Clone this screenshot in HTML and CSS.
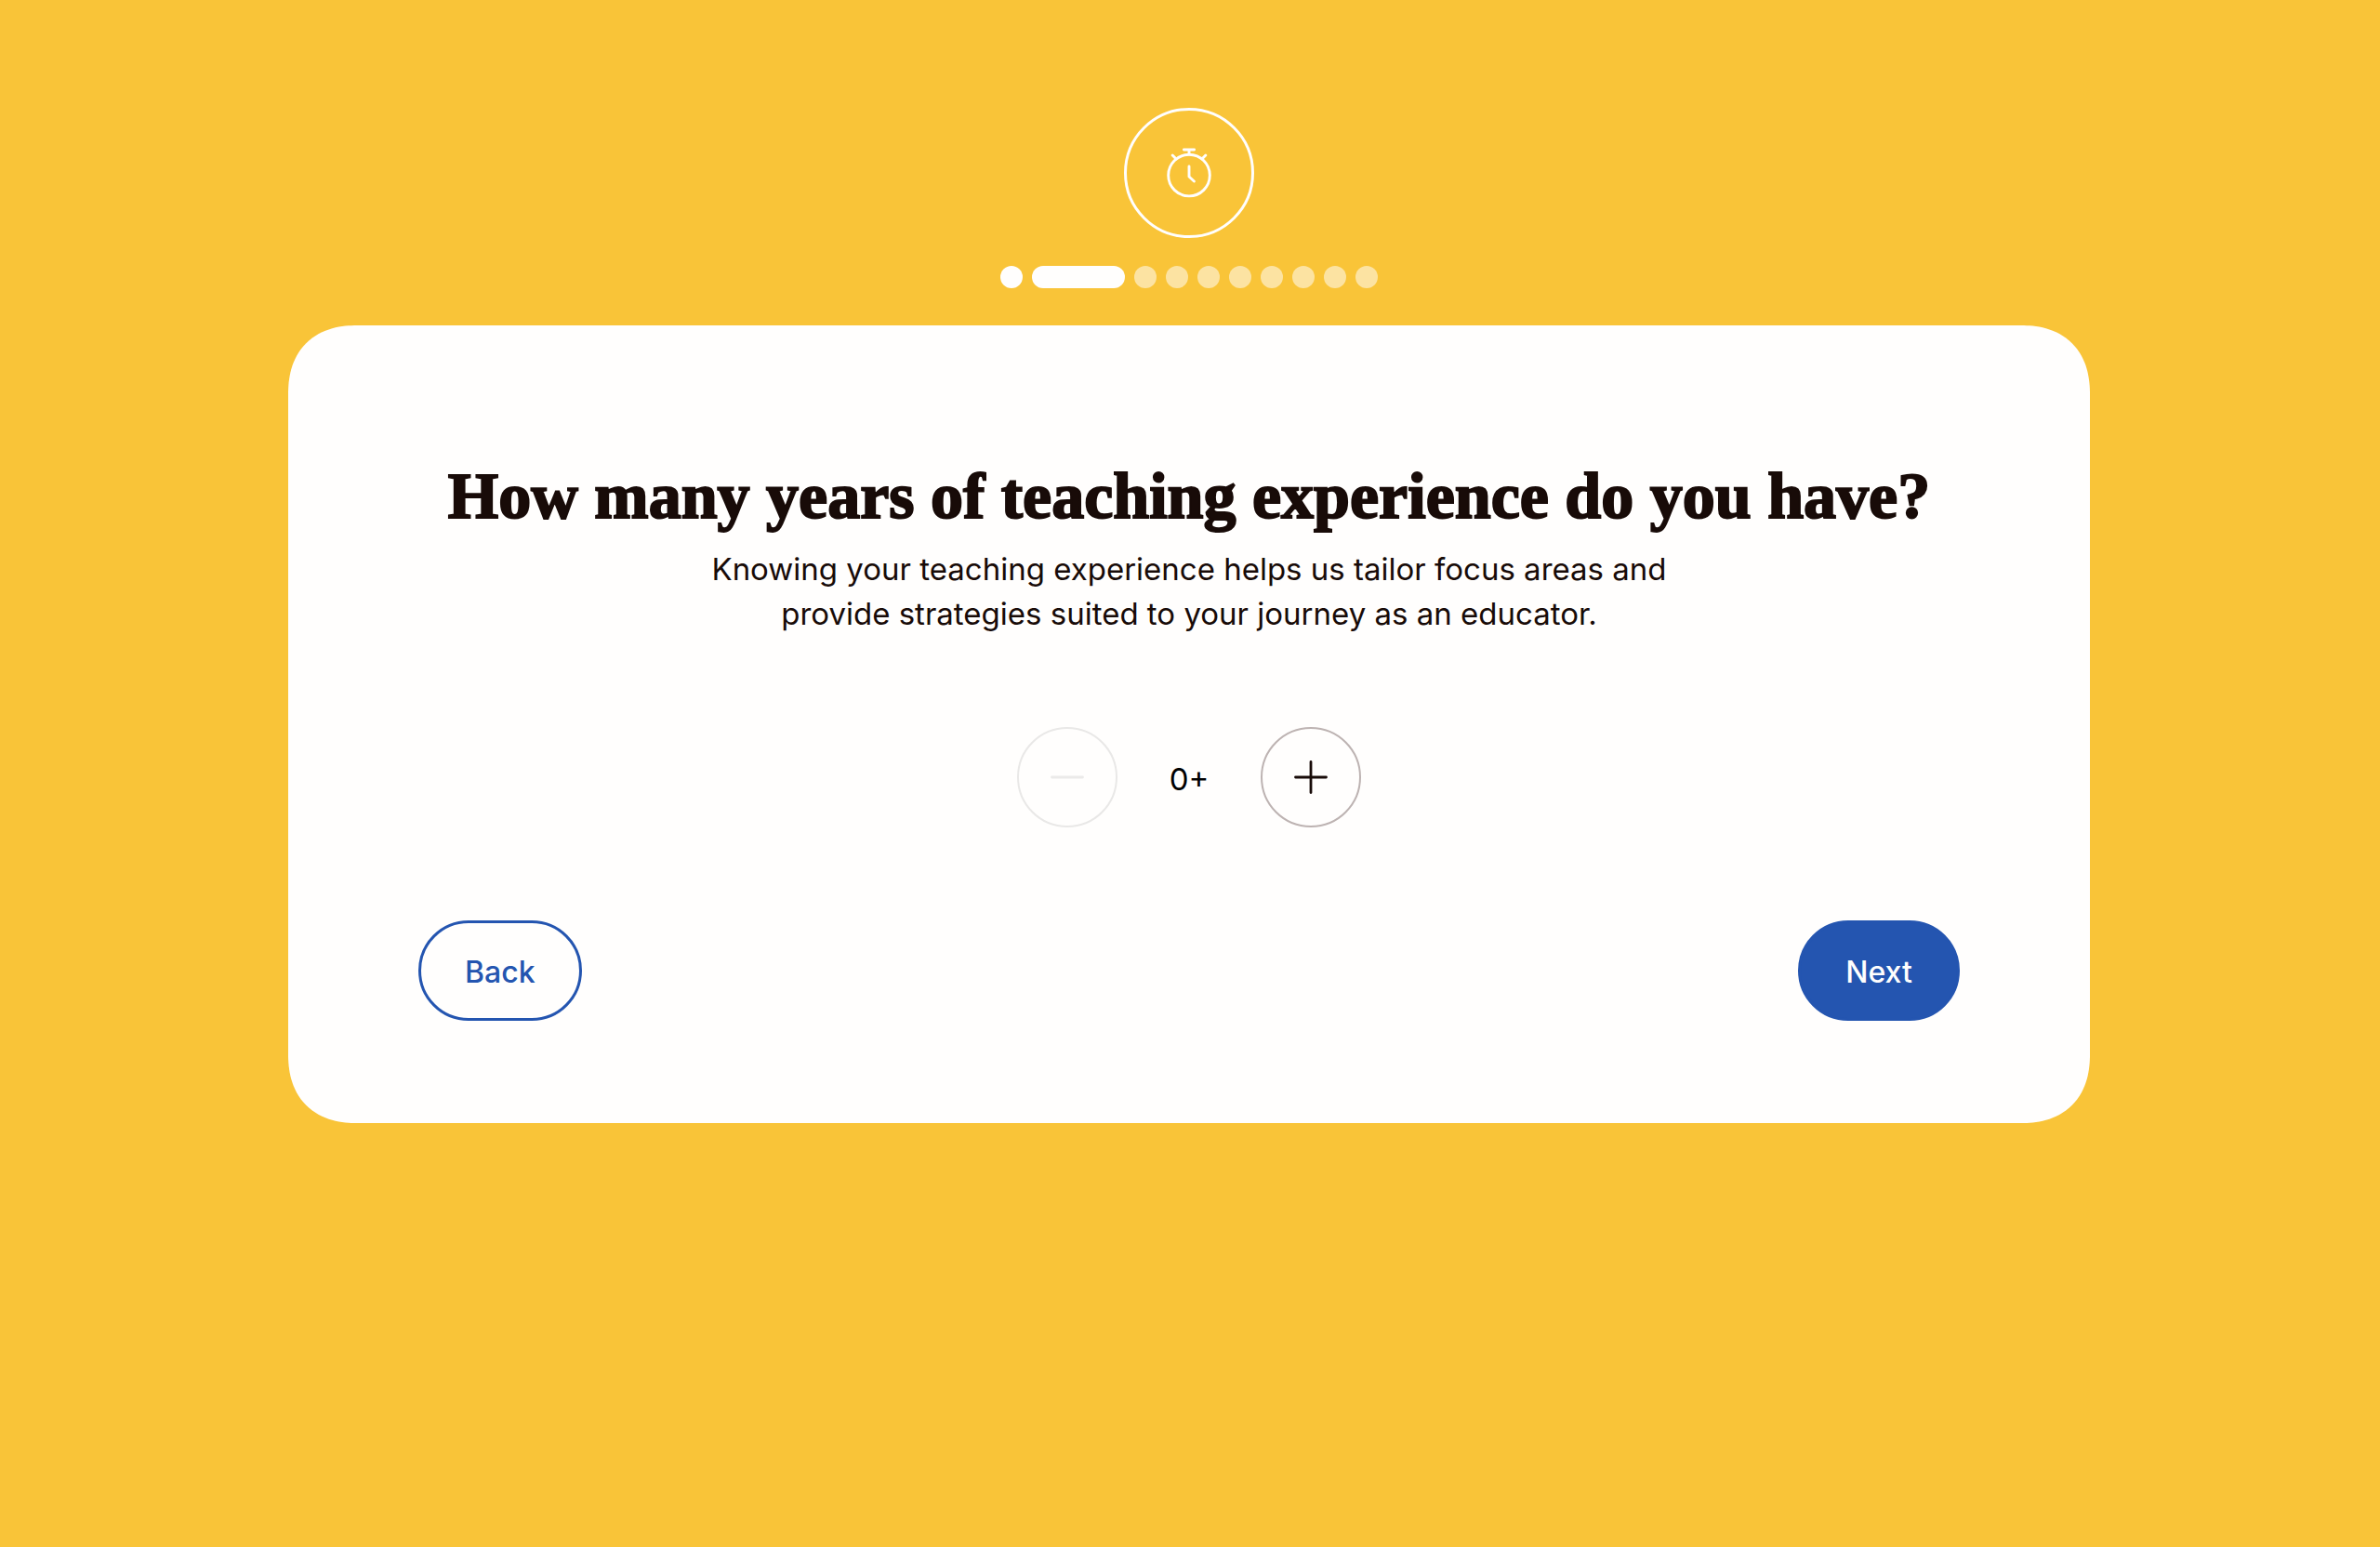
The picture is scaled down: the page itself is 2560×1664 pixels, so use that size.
FILE: index.html
```html
<!DOCTYPE html>
<html lang="en">
<head>
  <meta charset="utf-8">
  <meta name="viewport" content="width=device-width, initial-scale=1">
  <title>Teaching experience</title>
  <link rel="stylesheet" href="styles.css">
</head>
<body>
  <main class="page">
    <div class="badge">
      <svg class="badge-icon" viewBox="-30 -30 60 60" aria-hidden="true">
        <circle cx="0" cy="2.6" r="22.3"/>
        <path d="M-5.6-25H5.6M0-25v5M-17.8-19l3.4 3.6M17.8-19l-3.4 3.6M0-7V4l5.4 5"/>
      </svg>
    </div>
    <ol class="progress" aria-label="Step 2 of 10">
      <li class="dot done"></li>
      <li class="dot current"></li>
      <li class="dot"></li>
      <li class="dot"></li>
      <li class="dot"></li>
      <li class="dot"></li>
      <li class="dot"></li>
      <li class="dot"></li>
      <li class="dot"></li>
      <li class="dot"></li>
    </ol>
    <form class="card">
      <h1 class="title">How many years of teaching experience do you have?</h1>
      <p class="intro">Knowing your teaching experience helps us tailor focus areas and<br>provide strategies suited to your journey as an educator.</p>
      <div class="stepper">
        <button class="round" type="button" aria-label="Fewer years" disabled>
          <svg class="round-icon" viewBox="0 0 36 36" aria-hidden="true"><path d="M1.5 18h33"/></svg>
        </button>
        <output class="value">0+</output>
        <button class="round" type="button" aria-label="More years">
          <svg class="round-icon" viewBox="0 0 36 36" aria-hidden="true"><path d="M1.5 18h33M18 1.5v33"/></svg>
        </button>
      </div>
      <div class="actions">
        <button class="pill outline" type="button">Back</button>
        <button class="pill solid" type="submit">Next</button>
      </div>
    </form>
  </main>
</body>
</html>
```
FILE: styles.css
```css
*,
*::before,
*::after {
  box-sizing: border-box;
}

body {
  margin: 0;
  min-height: 100vh;
  background: #f9c438;
  color: #180b08;
  font: 400 33px/48px Inter, "Liberation Sans", sans-serif;
}

.page {
  display: flex;
  flex-direction: column;
  align-items: center;
  padding: 116px 26px 48px 24px;
}

.badge {
  display: grid;
  place-items: center;
  width: 140px;
  height: 140px;
  border: 3px solid #fffefd;
  border-radius: 50%;
}

.badge-icon {
  width: 60px;
  height: 60px;
  fill: none;
  stroke: #fffefd;
  stroke-width: 2.9;
  stroke-linecap: round;
  stroke-linejoin: round;
}

.progress {
  display: flex;
  gap: 10px;
  margin: 30px 0 40px;
  padding: 0;
  list-style: none;
}

.dot {
  width: 24px;
  height: 24px;
  border-radius: 12px;
  background: #fce3a2;
}

.done,
.current {
  background: #fffefd;
}

.current {
  width: 100px;
}

.card {
  width: 100%;
  max-width: 1938px;
  padding: 146px 140px 110px;
  border-radius: 64px;
  background: #fffefd;
  text-align: center;
}

@supports (corner-shape: squircle) {
  .card {
    border-radius: 74px;
    corner-shape: superellipse(1.2);
  }
}

.title {
  margin: 0 0 16px;
  font: 700 70px/76px "Liberation Serif", serif;
  -webkit-text-stroke: 2px currentColor;
}

.intro {
  margin: 0;
}

.stepper {
  display: flex;
  justify-content: center;
  align-items: center;
  margin: 98px 0 100px;
}

.round {
  display: grid;
  place-items: center;
  width: 108px;
  height: 108px;
  padding: 0;
  border: 2px solid #bdb3b2;
  border-radius: 50%;
  background: transparent;
  color: #180b08;
}

.round:disabled {
  border-color: #e9e8e7;
  color: #ebeae9;
}

.round-icon {
  width: 36px;
  height: 36px;
  fill: none;
  stroke: currentColor;
  stroke-width: 2.8;
  stroke-linecap: round;
}

.value {
  min-width: 154px;
  padding-top: 4px;
  color: #000;
}

.actions {
  display: flex;
  justify-content: space-between;
}

.pill {
  min-width: 174px;
  height: 108px;
  padding: 4px 47px 0;
  border: 3px solid #2455b0;
  border-radius: 54px;
  font: inherit;
  font-size: 32px;
  font-weight: 500;
}

.outline {
  background: transparent;
  color: #2455b0;
}

.solid {
  background: #2455b0;
  color: #fffefd;
}
```
